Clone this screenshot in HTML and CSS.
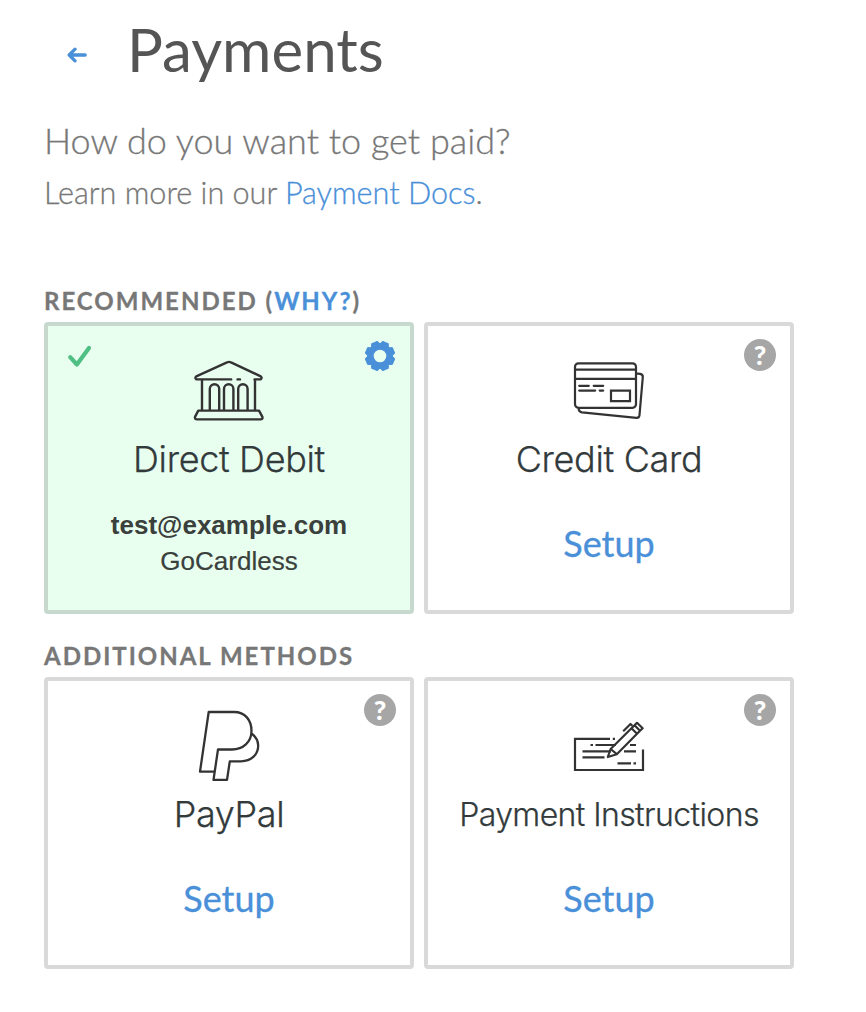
FILE: index.html
```
<!DOCTYPE html>
<html lang="en">
<head>
<meta charset="utf-8">
<title>Payments</title>
<link rel="stylesheet" href="styles.css">
</head>
<body>
<main class="page">
  <header class="header">
    <a class="back" aria-label="Back"><svg width="20" height="16" viewBox="0 0 20 16"><path d="M18.2 8H3M8 2.2L2.2 8l5.8 5.8" fill="none" stroke="#4a90d9" stroke-width="3.3" stroke-linecap="round" stroke-linejoin="round"/></svg></a>
    <h1 class="title">Payments</h1>
  </header>
  <p class="question">How do you want to get paid?</p>
  <p class="learn">Learn more in our <a class="link">Payment Docs</a>.</p>

  <h2 class="section">RECOMMENDED (<a class="link">WHY?</a>)</h2>
  <div class="cards">
    <section class="card card-active">
      <svg class="check" width="26" height="24" viewBox="0 0 26 24"><path d="M4.2 13.2L10.9 20.5 23 4" fill="none" stroke="#4fbf83" stroke-width="4.2" stroke-linecap="round" stroke-linejoin="round"/></svg>
      <svg class="badge gear" width="32" height="32" viewBox="-16 -16 32 32"><defs><path id="tooth" d="M-4.8 -11C-4.2 -12.5 -4.2 -14.8 -2.6 -15.2Q0 -14.9 2.6 -15.2C4.2 -14.8 4.2 -12.5 4.8 -11Z"/></defs><g fill="#4a90d9"><circle r="9.6" fill="none" stroke="#4a90d9" stroke-width="6.6"/><use href="#tooth" transform="rotate(22.5)"/><use href="#tooth" transform="rotate(67.5)"/><use href="#tooth" transform="rotate(112.5)"/><use href="#tooth" transform="rotate(157.5)"/><use href="#tooth" transform="rotate(202.5)"/><use href="#tooth" transform="rotate(247.5)"/><use href="#tooth" transform="rotate(292.5)"/><use href="#tooth" transform="rotate(337.5)"/></g></svg>
      <svg class="icon" viewBox="0 0 72 72"><g transform="translate(0 2.8)" fill="none" stroke="#333" stroke-width="2.4" stroke-linecap="round" stroke-linejoin="round"><path d="M38.2 22H3.3Q1.4 20.5 3.3 18.9L34 5Q36 4 38 5L67.7 18.9Q69.6 20.5 67.7 22H61.5M44.5 22H47M9 22V52M62 22V52M16.8 52V31.5A4.7 4.7 0 0 1 26.2 31.5V52M31 52V31.5A4.7 4.7 0 0 1 40.4 31.5V52M45.2 52V31.5A4.7 4.7 0 0 1 54.6 31.5V52M5.3 53.2H66L69.4 59.5Q69.9 62 67.5 62H4Q1.6 62 2 59.5Z" transform="translate(0 -.4)"/></g></svg>
      <h3 class="name">Direct Debit</h3>
      <p class="email">test@example.com</p>
      <p class="provider">GoCardless</p>
    </section>
    <section class="card">
      <span class="badge help">?</span>
      <svg class="icon" viewBox="0 0 72 72"><g transform="translate(0 2.6)" fill="none" stroke="#333" stroke-width="2.2" stroke-linecap="round" stroke-linejoin="round"><rect x="2" y="5.7" width="61" height="44.5" rx="3.5"/><path d="M2 12H63M2 21.2H63M6.2 28.2H15.8M20.7 28.2H30.2M6.2 33H22.2M26.7 33H30.2M64.5 16L67.2 16.3Q70 17 69.8 19.5L66.5 57.6Q66 60.4 63.5 60.2L9 54.7Q6 54.3 5.7 51.5"/><path stroke-linejoin="miter" d="M38 33H57V43.5H38Z"/></g></svg>
      <h3 class="name">Credit Card</h3>
      <a class="setup">Setup</a>
    </section>
  </div>

  <h2 class="section section-more">ADDITIONAL METHODS</h2>
  <div class="cards">
    <section class="card">
      <span class="badge help">?</span>
      <svg class="icon" viewBox="0 0 72 72"><path fill="none" stroke="#333" stroke-width="2.3" stroke-linejoin="round" d="M21 61.7H7L15.7 2H41C52 2 58.5 10 58.5 21C58.5 32 50 39.5 39 39.5H25L20.5 69.8H34L36.8 51.3H48C58 51.3 65.2 45 65.2 35.5C65.2 29.5 62 26 58.5 23.5"/></svg>
      <h3 class="name">PayPal</h3>
      <a class="setup">Setup</a>
    </section>
    <section class="card">
      <span class="badge help">?</span>
      <svg class="icon" viewBox="0 0 72 72"><g fill="none" stroke="#333" stroke-width="2.2"><path d="M37 28.8H2V60H70V39.5M39.8 28.8H42M17.5 35H20M22.5 35H43M57 35H63M9.5 41.3H38M51 41.3H63M9.5 47.3H31.5M44.5 53.4H58M60.5 53.4H63"/><path stroke-linejoin="round" d="M34.8 47L37.6 39 61.5 15.3 67 20.8 43.8 44.2ZM37.6 39L43.8 44.2M58.5 18.3L64 23.8M61.5 15.3L64 12.8 69.7 18.3 67 20.8M50.2 21.2L57.5 14 59.3 15.8"/></g></svg>
      <h3 class="name name-long">Payment Instructions</h3>
      <a class="setup">Setup</a>
    </section>
  </div>
</main>
</body>
</html>
```
FILE: styles.css
```
* { box-sizing: border-box; }
body { margin: 0; background: #fff; color: #777; font-family: Lato, sans-serif; }
h1, h2, h3, p { margin: 0; font-weight: 400; white-space: nowrap; }
.page { width: 866px; height: 1012px; padding: 7px 72px 0 44px; overflow: hidden; }
.header { display: flex; height: 84px; align-items: center; }
.back { display: flex; width: 83px; padding: 11px 0 0 23px; }
.title { color: #555; font-size: 60px; line-height: 84px; }
.question { margin-top: 24px; font-size: 36px; line-height: 50px; font-weight: 300; -webkit-text-stroke: .3px; }
.learn { margin-top: 7px; font-size: 30.6px; line-height: 42px; font-weight: 300; -webkit-text-stroke: .3px; }
.link { color: #4a90d9; }
.section { margin-top: 72px; height: 36px; font-size: 24px; line-height: 30px; font-weight: 700; letter-spacing: 2px; -webkit-text-stroke: .3px; }
.section-more { margin-top: 27px; }
.cards { display: grid; grid-template-columns: 370px 370px; gap: 10px; }
.card { position: relative; display: flex; flex-direction: column; align-items: center; height: 292px; padding-top: 29px; border: 4px solid #d9d9d9; border-radius: 4px; color: #333; }
.card-active { border-color: #c7d9cd; background: #e8fff0; }
.icon { width: 72px; height: 72px; flex: none; }
.badge { position: absolute; top: 12.5px; right: 14px; }
.gear { top: 14px; }
.help { width: 32px; height: 32px; border-radius: 50%; background: #a6a6a6; color: #fff; font-size: 27px; line-height: 31px; font-weight: 900; text-align: center; }
.check { position: absolute; top: 18px; left: 18px; }
.name { margin-top: 7px; height: 50px; font-family: Inter, "Liberation Sans", sans-serif; font-size: 36px; line-height: 50px; font-weight: 300; letter-spacing: -.35px; color: #333a3c; -webkit-text-stroke: .25px; }
.name-long { font-size: 32px; line-height: 52px; letter-spacing: -.6px; }
.email { margin-top: 23px; font: 700 26px/36px "Liberation Sans", sans-serif; color: #3a403c; }
.provider { font: 400 26px/36px "Liberation Sans", sans-serif; color: #3a403c; -webkit-text-stroke: .2px; }
.setup { margin-top: 34px; color: #4a90d9; font-size: 36px; line-height: 50px; -webkit-text-stroke: .3px; }
```
